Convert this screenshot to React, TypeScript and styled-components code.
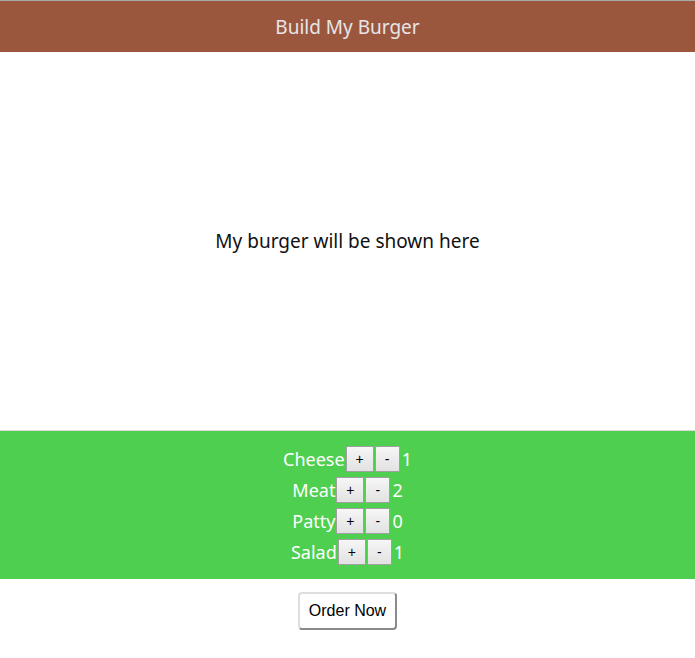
import React, { useState } from "react";
import styled, { createGlobalStyle } from "styled-components";

const Global = createGlobalStyle`
  html, body { margin: 0; padding: 0; background: #fff; }
  body { font-family: "Noto Sans", "Open Sans", sans-serif; }
`;

const Header = styled.header`
  height: 51px;
  border-top: 1px solid #a9a9a9;
  background: #9b573d;
  color: #e6e6ea;
  display: flex;
  align-items: center;
  justify-content: center;
  font-size: 19px;
`;

const BurgerArea = styled.main`
  height: 378px;
  display: flex;
  align-items: center;
  justify-content: center;
  font-size: 19px;
  color: #111;
  border-bottom: 1px solid #dcdcdc;
`;

const Controls = styled.section`
  background: #4ecf4f;
  padding: 12px 0 12px;
  display: flex;
  flex-direction: column;
  align-items: center;
`;

const Row = styled.div`
  display: flex;
  align-items: center;
  height: 31px;
  color: #fff;
  font-size: 18px;
`;

const Label = styled.span``;

const CtrlButton = styled.button<{ $w: number }>`
  width: ${(p) => p.$w}px;
  height: 26px;
  margin-left: 1px;
  padding: 0;
  border: 1px solid #a0a0a0;
  background: linear-gradient(#f6f6f6, #e2e2e2);
  font-family: "Liberation Sans", Arial, sans-serif;
  font-size: 14px;
  color: #000;
`;

const Count = styled.span`
  margin-left: 2px;
`;

const Footer = styled.div`
  display: flex;
  justify-content: center;
  padding-top: 13px;
`;

const OrderButton = styled.button`
  width: 99px;
  height: 38px;
  border: 2px solid #dedede;
  border-right-color: #8a8a8a;
  border-bottom-color: #8a8a8a;
  border-radius: 4px;
  background: #fff;
  font-family: "Liberation Sans", Arial, sans-serif;
  font-size: 16px;
  color: #000;
`;

const initial = [
  { name: "Cheese", count: 1 },
  { name: "Meat", count: 2 },
  { name: "Patty", count: 0 },
  { name: "Salad", count: 1 },
];

export default function App() {
  const [items, setItems] = useState(initial);
  const change = (i: number, d: number) =>
    setItems((prev) =>
      prev.map((it, j) => (j === i ? { ...it, count: Math.max(0, it.count + d) } : it))
    );
  return (
    <>
      <Global />
      <Header>Build My Burger</Header>
      <BurgerArea>My burger will be shown here</BurgerArea>
      <Controls>
        {items.map((it, i) => (
          <Row key={it.name}>
            <Label>{it.name}</Label>
            <CtrlButton $w={28} onClick={() => change(i, 1)}>+</CtrlButton>
            <CtrlButton $w={25} onClick={() => change(i, -1)}>-</CtrlButton>
            <Count>{it.count}</Count>
          </Row>
        ))}
      </Controls>
      <Footer>
        <OrderButton>Order Now</OrderButton>
      </Footer>
    </>
  );
}
